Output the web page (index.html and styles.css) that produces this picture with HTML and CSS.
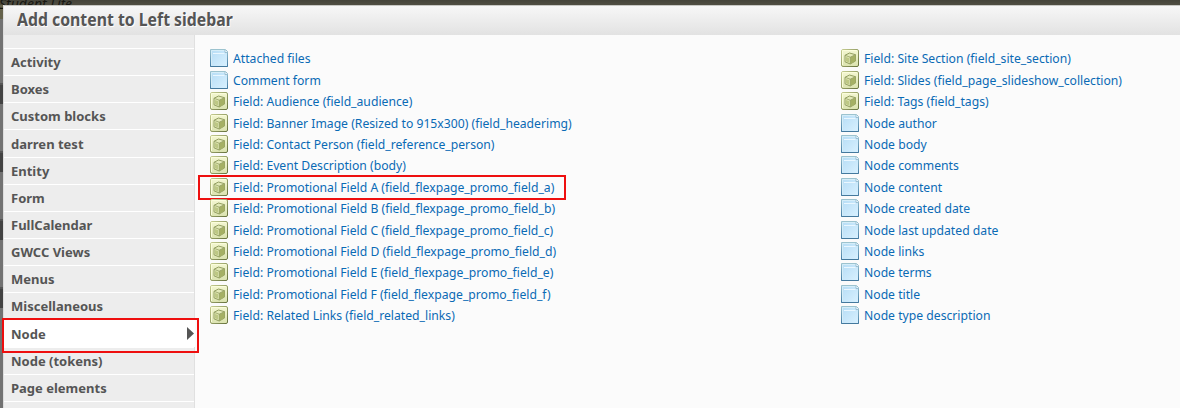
FILE: index.html
```
<!DOCTYPE html>
<html lang="en">
<head>
<meta charset="utf-8">
<title>Add content to Left sidebar</title>
<link rel="stylesheet" href="styles.css">
</head>
<body>
<svg class="defs" width="0" height="0" aria-hidden="true">
  <defs>
    <linearGradient id="blue" x1="0" y1="0" x2="1" y2="1"><stop offset="0" stop-color="#b5dcf5"/><stop offset="1" stop-color="#d9f1ff"/></linearGradient>
    <linearGradient id="edge" x1="0" y1="0" x2="0" y2="1"><stop offset="0" stop-color="#9cc3cf"/><stop offset="1" stop-color="#427ba5"/></linearGradient>
    <linearGradient id="green" x1="0" y1="0" x2="0" y2="1"><stop offset="0" stop-color="#f4f7d2"/><stop offset="1" stop-color="#dbe3b0"/></linearGradient>
    <linearGradient id="rim" x1="0" y1="0" x2="1" y2="1"><stop offset="0" stop-color="#c6cd91"/><stop offset="1" stop-color="#65713c"/></linearGradient>
  </defs>
  <symbol id="page" viewBox="0 0 18 18">
    <path d="M.5.5h15l2 2v15H.5z" fill="url(#blue)" stroke="url(#edge)"/>
    <path d="M1.500 16.500v-15h14" fill="none" stroke="#d5edf8"/>
    <path d="M3 4.500h11.500" stroke="#eaf7ff"/>
    <path d="M15 1v2.500h2.500" fill="#fff" stroke="#8bb4c8" stroke-width=".8"/>
    <path d="M.5 17.500h17" stroke="#44799d"/>
  </symbol>
  <symbol id="cube" viewBox="0 0 18 18">
    <rect x=".5" y=".5" width="17" height="17" rx="1.500" fill="url(#green)" stroke="url(#rim)"/>
    <path d="M1.500 16V1.500H16" fill="none" stroke="#fbfddc"/>
    <path d="M4 6.300L8.500 4 14.500 5.700V12L9.200 15 4 12.800z" fill="#e3eab8" stroke="#939e62"/>
    <path d="M9.200 8.200l5.300-2.500V12L9.200 15z" fill="#a5b064"/>
    <path d="M5 8l3 1v4.500l-3-1.200z" fill="#bdc884"/>
    <path d="M4 6.300l5.200 1.900 5.300-2.500M9.200 8.200V15" fill="none" stroke="#939e62" stroke-width=".8"/>
  </symbol>
</svg>
<div class="page">
  <div class="backdrop-text">Student Life</div>
  <div class="shade"><i></i><i></i><i></i><i></i></div>
  <div class="modal">
    <h1 class="title"><span>Add content to Left sidebar</span></h1>
    <div class="content">
      <nav class="categories">
        <a>Activity</a><a>Boxes</a><a>Custom blocks</a><a>darren test</a><a>Entity</a><a>Form</a><a>FullCalendar</a><a>GWCC Views</a><a>Menus</a><a>Miscellaneous</a><a class="active">Node<svg class="arrow" viewBox="0 0 7 13"><path d="M0 0l7 6.500L0 13z" fill="#555"/></svg></a><a>Node (tokens)</a><a>Page elements</a><a></a>
      </nav>
      <div class="column first">
        <a><svg><use href="#page"/></svg><span>Attached files</span></a>
        <a><svg><use href="#page"/></svg><span>Comment form</span></a>
        <a><svg><use href="#cube"/></svg><span>Field: Audience (field_audience)</span></a>
        <a><svg><use href="#cube"/></svg><span>Field: Banner Image (Resized to 915x300) (field_headerimg)</span></a>
        <a><svg><use href="#cube"/></svg><span>Field: Contact Person (field_reference_person)</span></a>
        <a><svg><use href="#cube"/></svg><span>Field: Event Description (body)</span></a>
        <a class="marked"><svg><use href="#cube"/></svg><span>Field: Promotional Field A (field_flexpage_promo_field_a)</span></a>
        <a><svg><use href="#cube"/></svg><span>Field: Promotional Field B (field_flexpage_promo_field_b)</span></a>
        <a><svg><use href="#cube"/></svg><span>Field: Promotional Field C (field_flexpage_promo_field_c)</span></a>
        <a><svg><use href="#cube"/></svg><span>Field: Promotional Field D (field_flexpage_promo_field_d)</span></a>
        <a><svg><use href="#cube"/></svg><span>Field: Promotional Field E (field_flexpage_promo_field_e)</span></a>
        <a><svg><use href="#cube"/></svg><span>Field: Promotional Field F (field_flexpage_promo_field_f)</span></a>
        <a><svg><use href="#cube"/></svg><span>Field: Related Links (field_related_links)</span></a>
      </div>
      <div class="column">
        <a><svg><use href="#cube"/></svg><span>Field: Site Section (field_site_section)</span></a>
        <a><svg><use href="#cube"/></svg><span>Field: Slides (field_page_slideshow_collection)</span></a>
        <a><svg><use href="#cube"/></svg><span>Field: Tags (field_tags)</span></a>
        <a><svg><use href="#page"/></svg><span>Node author</span></a>
        <a><svg><use href="#page"/></svg><span>Node body</span></a>
        <a><svg><use href="#page"/></svg><span>Node comments</span></a>
        <a><svg><use href="#page"/></svg><span>Node content</span></a>
        <a><svg><use href="#page"/></svg><span>Node created date</span></a>
        <a><svg><use href="#page"/></svg><span>Node last updated date</span></a>
        <a><svg><use href="#page"/></svg><span>Node links</span></a>
        <a><svg><use href="#page"/></svg><span>Node terms</span></a>
        <a><svg><use href="#page"/></svg><span>Node title</span></a>
        <a><svg><use href="#page"/></svg><span>Node type description</span></a>
      </div>
    </div>
  </div>
</div>
</body>
</html>
```
FILE: styles.css
```
*, *::after { box-sizing: border-box; }
body { margin: 0; font-family: "Noto Sans", sans-serif; }
.defs { position: absolute; }
.page { position: relative; width: 1180px; height: 408px; overflow: hidden; padding: 5px 0 0 3px; background: linear-gradient(#45443a 0, #504e42 5px, #65624c 5px 19px, #727272 19px); }
.backdrop-text { position: absolute; left: -1px; top: -5px; font: italic 14px/18px "Noto Sans", sans-serif; color: #181812; }
.shade { position: absolute; left: 0; top: 83px; width: 3px; }
.shade i { display: block; height: 21px; margin-bottom: 47px; background: #434343; border-top: 2px solid #555; }
.modal { position: relative; width: 1177px; height: 403px; background: #fbfbfb; border-left: 1px solid #ddd; }
.title { margin: 0; height: 30px; padding-left: 13px; background: linear-gradient(#f7f7f7, #e2e2e2); border-top: 1px solid #c8c8c4; font-size: 17px; line-height: 27px; color: #555; white-space: nowrap; }
.title span { display: inline-block; transform: scaleX(.93); transform-origin: left; text-shadow: 1px 1px #fff; }
.content { display: flex; height: 373px; }
.categories { width: 191px; flex: none; padding-top: 13px; background: #ededed; border-right: 1px solid #e0e0e0; }
.categories a { display: flex; align-items: center; position: relative; height: 27.17px; padding-left: 7px; border-top: 1px solid #fff; font-size: 13px; font-weight: 700; color: #555; }
.categories .active { background: #fff; width: 191px; }
.categories .active::after { content: ""; position: absolute; left: -2px; top: -3px; width: 197px; height: 35px; border: 2px solid #ee0f0f; }
.arrow { width: 7px; height: 13px; margin-left: auto; margin-right: 1px; }
.column { padding-top: 12.6px; }
.first { width: 646px; flex: none; padding-left: 15px; }
.column a { position: relative; display: flex; align-items: center; height: 21.42px; color: #0a6ab5; font-size: 13px; white-space: nowrap; }
.column svg { width: 18px; height: 18px; margin-right: 5px; flex: none; }
.column span { transform: scaleX(.937); transform-origin: left; }
.marked::after { content: ""; position: absolute; left: -12px; top: -1px; width: 368px; height: 25px; border: 2px solid #ee0f0f; }
```
